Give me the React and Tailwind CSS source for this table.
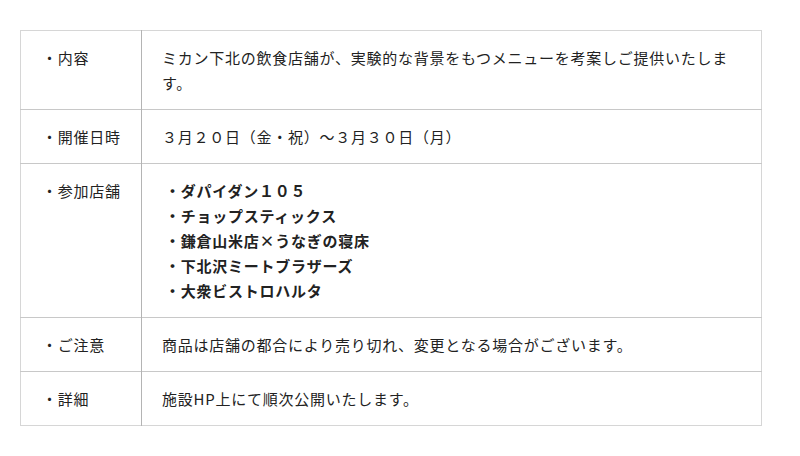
const rows = [
  {
    label: '・内容',
    body: 'ミカン下北の飲食店舗が、実験的な背景をもつメニューを考案しご提供いたします。',
  },
  {
    label: '・開催日時',
    body: '３月２０日（金・祝）～３月３０日（月）',
  },
  {
    label: '・参加店舗',
    list: [
      '・ダパイダン１０５',
      '・チョップスティックス',
      '・鎌倉山米店×うなぎの寝床',
      '・下北沢ミートブラザーズ',
      '・大衆ビストロハルタ',
    ],
  },
  {
    label: '・ご注意',
    body: '商品は店舗の都合により売り切れ、変更となる場合がございます。',
  },
  {
    label: '・詳細',
    body: '施設HP上にて順次公開いたします。',
  },
]

export default function App() {
  return (
    <div
      className="min-h-[456px] w-[800px] bg-white pl-5 pt-[30px] text-[15px] leading-[25px] tracking-[0.75px] text-[#222]"
      style={{ fontFamily: '"Noto Sans CJK JP", "Noto Sans", sans-serif' }}
    >
      <table className="w-[742px] table-fixed border-collapse border border-[#d6d6d6]">
        <tbody>
          {rows.map((row) => (
            <tr key={row.label} className="border-b border-[#c8c8c8] last:border-[#d6d6d6]">
              <td className="w-[121px] border-r border-[#b4b4b4] py-[14px] pl-[21px] align-top">
                {row.label}
              </td>
              <td className="py-[14px] pl-5 pr-5 align-top">
                {row.list ? (
                  <ul className="pl-[3px] font-bold">
                    {row.list.map((item) => (
                      <li key={item}>{item}</li>
                    ))}
                  </ul>
                ) : (
                  row.body
                )}
              </td>
            </tr>
          ))}
        </tbody>
      </table>
    </div>
  )
}
